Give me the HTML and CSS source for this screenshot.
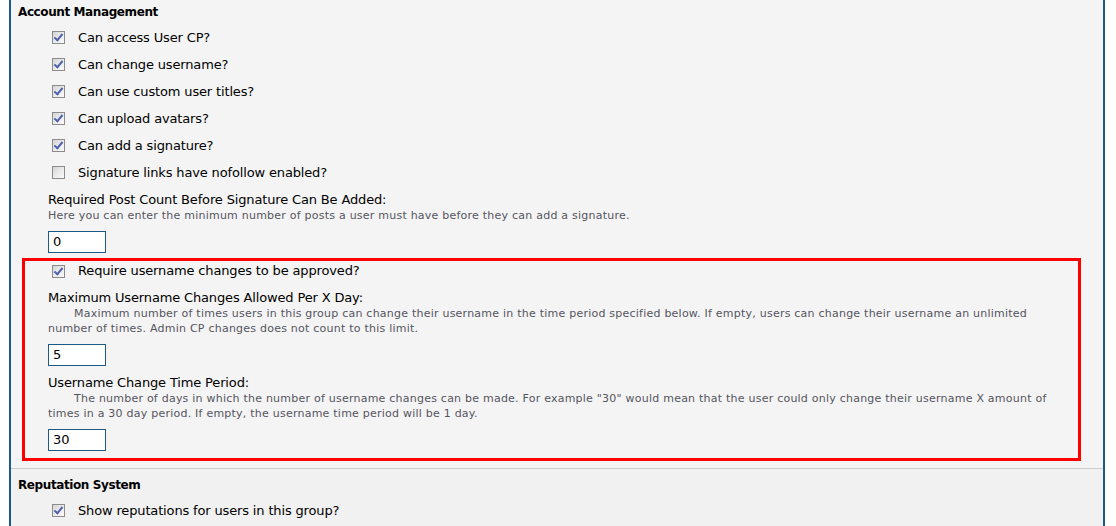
FILE: index.html
```html
<!DOCTYPE html>
<html>
<head>
<meta charset="utf-8">
<title>User Group Permissions</title>
<link rel="stylesheet" href="styles.css">
</head>
<body>
<div class="panel">
  <div class="section first">
    <div class="section-title">Account Management</div>
    <div class="section-body">
      <div class="group">
        <div class="check-row"><span class="cb checked"></span><span class="check-label">Can access User CP?</span></div>
        <div class="check-row"><span class="cb checked"></span><span class="check-label">Can change username?</span></div>
        <div class="check-row"><span class="cb checked"></span><span class="check-label">Can use custom user titles?</span></div>
        <div class="check-row"><span class="cb checked"></span><span class="check-label">Can upload avatars?</span></div>
        <div class="check-row"><span class="cb checked"></span><span class="check-label">Can add a signature?</span></div>
        <div class="check-row"><span class="cb"></span><span class="check-label">Signature links have nofollow enabled?</span></div>
        <div class="field">
          <div class="field-label">Required Post Count Before Signature Can Be Added:</div>
          <div class="desc">Here you can enter the minimum number of posts a user must have before they can add a signature.</div>
          <div class="text-input">0</div>
        </div>
      </div>
      <div class="highlight">
        <div class="check-row short"><span class="cb checked"></span><span class="check-label">Require username changes to be approved?</span></div>
        <div class="field spaced">
          <div class="field-label">Maximum Username Changes Allowed Per X Day:</div>
          <div class="desc indent">Maximum number of times users in this group can change their username in the time period specified below. If empty, users can change their username an unlimited number of times. Admin CP changes does not count to this limit.</div>
          <div class="text-input">5</div>
        </div>
        <div class="field spaced">
          <div class="field-label">Username Change Time Period:</div>
          <div class="desc indent">The number of days in which the number of username changes can be made. For example "30" would mean that the user could only change their username X amount of times in a 30 day period. If empty, the username time period will be 1 day.</div>
          <div class="text-input">30</div>
        </div>
      </div>
    </div>
  </div>
  <div class="section second">
    <div class="section-title">Reputation System</div>
    <div class="section-body">
      <div class="group">
        <div class="check-row"><span class="cb checked"></span><span class="check-label">Show reputations for users in this group?</span></div>
      </div>
    </div>
  </div>
</div>
</body>
</html>
```
FILE: styles.css
```css
html, body {
  margin: 0;
  padding: 0;
  background: #ffffff;
  height: 526px;
  overflow: hidden;
}

body {
  font-family: "DejaVu Sans", Verdana, sans-serif;
  color: #000;
}

.panel {
  margin-left: 9px;
  width: 1092px;
  border-left: 2px solid #1a5b8c;
  border-right: 2px solid #1a5b8c;
  background: #f4f4f4;
  min-height: 526px;
}

.section-title {
  font-weight: bold;
  font-size: 12px;
  letter-spacing: -0.4px;
  line-height: 16px;
  padding: 8px 0 0 7px;
}

.first .section-title {
  padding-top: 4px;
}

.second {
  border-top: 1px solid #cccccc;
  background: #f1f1f1;
}

.section-body {
  padding: 0 22px 7px 11px;
}

.group {
  padding-left: 26px;
  padding-top: 4px;
}

.check-row {
  height: 27px;
  display: flex;
  align-items: center;
  padding-left: 4px;
}

.check-row.short {
  height: 20px;
}

.cb {
  width: 11px;
  height: 11px;
  border: 1px solid #8c8c8c;
  background: linear-gradient(135deg, #d4d4d4 0%, #ececec 55%, #fafafa 100%);
  position: relative;
  flex: none;
  margin-right: 13px;
}

.cb.checked::after {
  content: "";
  position: absolute;
  left: 3px;
  top: 0px;
  width: 3px;
  height: 7px;
  border-right: 2px solid #4f62ad;
  border-bottom: 2px solid #4f62ad;
  transform: rotate(40deg);
}

.check-label {
  font-size: 13px;
  letter-spacing: -0.15px;
  line-height: 16px;
}

.field {
  margin-top: 6px;
}

.field.spaced {
  margin-top: 9px;
}

.field-label {
  font-size: 13px;
  letter-spacing: -0.15px;
  line-height: 16px;
}

.desc {
  font-size: 11px;
  letter-spacing: 0.23px;
  line-height: 15px;
  color: #555560;
  max-width: 1000px;
}

.desc.indent {
  text-indent: 26px;
}

.text-input {
  margin-top: 8px;
  width: 52px;
  height: 20px;
  border: 1px solid #1e5a86;
  background: #fff;
  font-size: 13px;
  line-height: 20px;
  padding-left: 4px;
}

.highlight {
  margin-top: 5px;
  border: 3px solid #ff0000;
  padding: 0 0 7px 23px;
}
```
